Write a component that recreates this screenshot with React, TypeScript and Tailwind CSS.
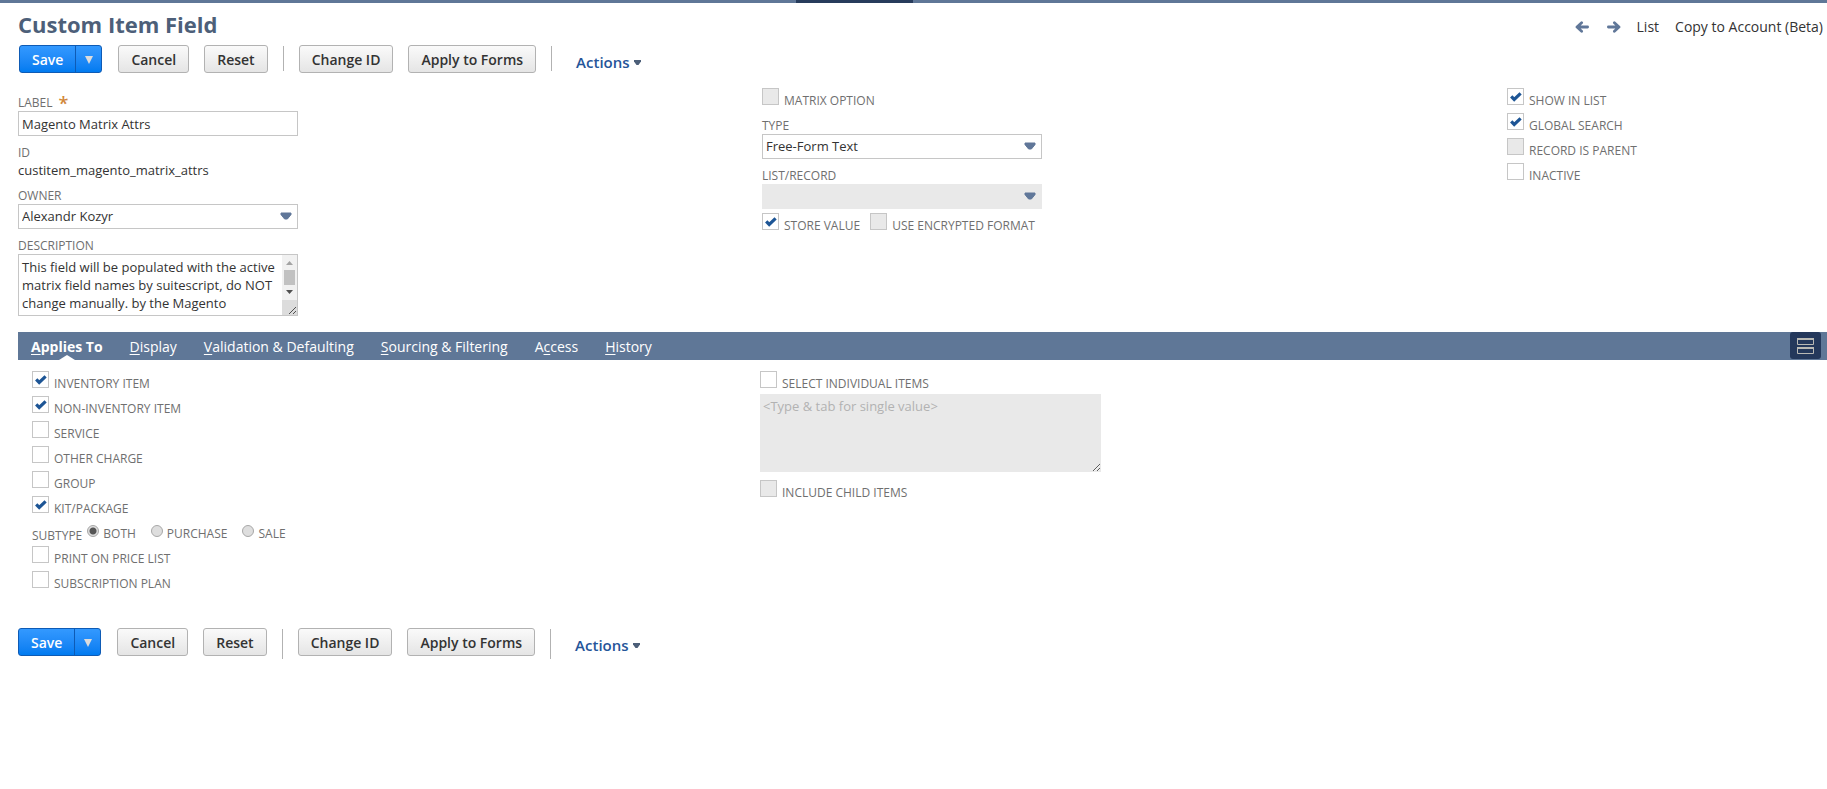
import type { ReactNode } from 'react';

const itemTypes = [
    { id: 'inventory', label: 'INVENTORY ITEM', checked: true },
    { id: 'noninventory', label: 'NON-INVENTORY ITEM', checked: true },
    { id: 'service', label: 'SERVICE', checked: false },
    { id: 'othercharge', label: 'OTHER CHARGE', checked: false },
    { id: 'group', label: 'GROUP', checked: false },
    { id: 'kit', label: 'KIT/PACKAGE', checked: true },
];

const subtypes = ['BOTH', 'PURCHASE', 'SALE'];

// key is the index of the underlined access key letter
const tabs = [
    { label: 'Applies To', key: 0 },
    { label: 'Display', key: 0 },
    { label: 'Validation & Defaulting', key: 0 },
    { label: 'Sourcing & Filtering', key: 0 },
    { label: 'Access', key: 1 },
    { label: 'History', key: 0 },
];

function Checkbox({ id, label, checked = false, disabled = false }: { id: string; label: string; checked?: boolean; disabled?: boolean }) {
    return (
        <div className="flex h-[25px] items-start">
            <span className="relative block h-[17px] w-[17px]">
                <input
                    id={id}
                    type="checkbox"
                    defaultChecked={checked}
                    disabled={disabled}
                    className="peer block h-[17px] w-[17px] appearance-none border border-[#c6c6c6] bg-white disabled:bg-[#e9e9e9]"
                />
                <svg viewBox="0 0 17 17" className="pointer-events-none absolute inset-0 hidden h-[17px] w-[17px] peer-checked:block">
                    <path d="M4.2 8.4 L7.2 11.4 L13.6 5.4" fill="none" stroke="#1d5595" strokeWidth="3.2" />
                </svg>
            </span>
            <label htmlFor={id} className="ml-[5px] pt-[5px] text-xs leading-4 text-[#6f6f6f]">{label}</label>
        </div>
    );
}

function FieldLabel({ htmlFor, children }: { htmlFor: string; children: ReactNode }) {
    return (
        <label htmlFor={htmlFor} className="flex h-[17px] items-start pt-px text-xs leading-4 text-[#6f6f6f]">{children}</label>
    );
}

function SelectField({ id, label, value, disabled = false }: { id: string; label: string; value: string; disabled?: boolean }) {
    return (
        <div className="mb-2 w-[280px]">
            <FieldLabel htmlFor={id}>{label}</FieldLabel>
            <div className="relative">
                <select
                    id={id}
                    defaultValue={value}
                    disabled={disabled}
                    className="block h-[25px] w-full appearance-none border border-[#c6c6c6] bg-white px-[3px] pt-px text-[13px] text-[#333] opacity-100 disabled:border-[#e9e9e9] disabled:bg-[#e9e9e9]"
                >
                    <option value={value}>{value}</option>
                </select>
                <svg viewBox="0 0 12 8" className="pointer-events-none absolute top-2 right-[6px] h-2 w-3">
                    <path d="M1 1 H11 V2.6 L7.4 7 H4.6 L1 2.6 Z" fill="#607799" stroke="#607799" strokeLinejoin="round" />
                </svg>
            </div>
        </div>
    );
}

function GrayButton({ children }: { children: ReactNode }) {
    return (
        <button type="button" className="h-7 rounded-[3px] border border-[#b2b2b2] bg-linear-to-b from-[#fafafa] to-[#e5e5e5] px-3 pt-px text-sm leading-5 font-semibold text-[#333]">
            {children}
        </button>
    );
}

function ButtonBar({ tall = false }: { tall?: boolean }) {
    const divider = tall ? 'mt-px h-[30px] w-px bg-[#b2b2b2]' : 'mt-px h-[25px] w-px bg-[#b2b2b2]';

    return (
        <div className="flex items-start">
            <div className="mr-4 flex h-7 rounded-[3px] border border-[#0e5bb5] bg-linear-to-b from-[#3399ff] to-[#007bf0] text-white">
                <button type="button" className="px-3 pt-px text-sm leading-5 font-semibold">Save</button>
                <button type="button" aria-label="More save options" className="flex w-[26px] items-center justify-center border-l border-[#0e5bb5] pt-px">
                    <svg viewBox="0 0 8 8" className="h-2 w-2">
                        <path d="M0 0 H8 L4 8 Z" fill="#dcdcdc" />
                    </svg>
                </button>
            </div>
            <div className="flex gap-[15px]">
                <GrayButton>Cancel</GrayButton>
                <GrayButton>Reset</GrayButton>
                <span className={divider} />
                <GrayButton>Change ID</GrayButton>
                <GrayButton>Apply to Forms</GrayButton>
                <span className={divider} />
            </div>
            <a href="#actions" className="ml-6 flex items-center gap-1 pt-[7px] text-[15px] leading-5 font-semibold text-[#255599]">
                Actions
                <svg viewBox="0 0 7 5" className="h-[5px] w-[7px]">
                    <path d="M0 0 H7 V1.5 L4.5 5 H2.5 L0 1.5 Z" fill="#4d5f79" />
                </svg>
            </a>
        </div>
    );
}

function Arrow({ flip = false }: { flip?: boolean }) {
    return (
        <svg viewBox="0 0 14 12" className={flip ? 'h-3 w-[14px] -scale-x-100' : 'h-3 w-[14px]'}>
            <path d="M6.6 1.8 L2 6 L6.6 10.2 M2.4 6 H12.6" fill="none" stroke="#607799" strokeWidth="2.8" strokeLinecap="round" strokeLinejoin="round" />
        </svg>
    );
}

// Always-visible scrollbar with the resize corner below it
function ScrollTrack() {
    return (
        <svg viewBox="0 0 15 60" className="pointer-events-none absolute top-px right-px h-[60px] w-[15px]">
            <path d="M0 0 H15 V45 H0 Z" fill="#f1f1f1" />
            <path d="M0 45 H15 V60 H0 Z" fill="#dcdcdc" />
            <path d="M4 10 L7.5 6 L11 10 Z" fill="#a3a3a3" />
            <path d="M2 15 H13 V30 H2 Z" fill="#c1c1c1" />
            <path d="M4 35 H11 L7.5 39 Z" fill="#505050" />
            <path d="M7 59 L14 52 M11 59 L14 56" stroke="#505050" strokeWidth="1" />
        </svg>
    );
}

export default function App() {
    return (
        <div className="min-h-screen bg-white font-['Open_Sans',sans-serif] text-[#333]">
            {/* Bottom edge of the navigation bar */}
            <div className="flex h-[3px] bg-[#5f7797]">
                <div className="ml-[796px] w-[117px] bg-[#273c5c]" />
            </div>

            <header className="flex items-start justify-between pr-1 pl-[18px]">
                <h1 className="pt-[6px] text-[22px] leading-[30px] font-bold text-[#4d5f79]">Custom Item Field</h1>
                <nav className="flex items-center gap-4 pt-[14px] text-sm leading-5">
                    <a href="#prev" aria-label="Previous"><Arrow /></a>
                    <a href="#next" aria-label="Next" className="ml-[2px]"><Arrow flip /></a>
                    <a href="#list">List</a>
                    <a href="#copy">Copy to Account (Beta)</a>
                </nav>
            </header>

            <div className="mt-[6px] pl-[19px]">
                <ButtonBar />
            </div>

            <main className="pl-[18px]">
                <div className="mt-[15px] grid grid-cols-[744fr_745fr_320px]">
                    <div className="pt-[6px]">
                        <div className="mb-2 w-[280px]">
                            <FieldLabel htmlFor="label">
                                LABEL <span className="ml-[6px] text-lg leading-4 font-semibold text-[#d1873a]">*</span>
                            </FieldLabel>
                            <input id="label" type="text" defaultValue="Magento Matrix Attrs" className="block h-[25px] w-full border border-[#c6c6c6] px-[3px] text-[13px]" />
                        </div>
                        <div className="mb-2">
                            <div className="h-[17px] pt-px text-xs leading-4 text-[#6f6f6f]">ID</div>
                            <div className="text-[13px] leading-[18px]">custitem_magento_matrix_attrs</div>
                        </div>
                        <SelectField id="owner" label="OWNER" value="Alexandr Kozyr" />
                        <FieldLabel htmlFor="description">DESCRIPTION</FieldLabel>
                        <div className="relative w-[280px]">
                            <textarea
                                id="description"
                                defaultValue="This field will be populated with the active matrix field names by suitescript, do NOT change manually. by the Magento connector. It is used for matrix items."
                                className="block h-[62px] w-full resize-none overflow-hidden border border-[#c6c6c6] pt-[3px] pr-[18px] pl-[3px] text-[13px] leading-[18px]"
                            />
                            <ScrollTrack />
                        </div>
                    </div>

                    <div>
                        <Checkbox id="matrix" label="MATRIX OPTION" disabled />
                        <div className="pt-[4px]">
                            <SelectField id="type" label="TYPE" value="Free-Form Text" />
                            <SelectField id="listrecord" label="LIST/RECORD" value="" disabled />
                        </div>
                        <div className="-mt-1 flex gap-[10px]">
                            <Checkbox id="store" label="STORE VALUE" checked />
                            <Checkbox id="encrypted" label="USE ENCRYPTED FORMAT" disabled />
                        </div>
                    </div>

                    <div>
                        <Checkbox id="showinlist" label="SHOW IN LIST" checked />
                        <Checkbox id="globalsearch" label="GLOBAL SEARCH" checked />
                        <Checkbox id="parent" label="RECORD IS PARENT" disabled />
                        <Checkbox id="inactive" label="INACTIVE" />
                    </div>
                </div>

                <div className="mt-4 flex h-7 items-start justify-between bg-[#5f7797] pr-[6px] pl-[13px]">
                    <div role="tablist" className="flex h-full gap-[27px]">
                        {tabs.map((tab, index) => (
                            <button
                                key={tab.label}
                                type="button"
                                role="tab"
                                aria-selected={index === 0}
                                className={index === 0 ? 'relative pt-[2px] text-sm leading-5 font-bold text-white' : 'pt-[2px] text-sm leading-5 text-white'}
                            >
                                {tab.label.slice(0, tab.key)}
                                <span className="underline underline-offset-2">{tab.label[tab.key]}</span>
                                {tab.label.slice(tab.key + 1)}
                                {index === 0 && (
                                    <svg viewBox="0 0 16 5" className="absolute bottom-0 left-1/2 h-[5px] w-4 -translate-x-1/2">
                                        <path d="M0 5 L8 0 L16 5 Z" fill="#fff" />
                                    </svg>
                                )}
                            </button>
                        ))}
                    </div>
                    <button type="button" aria-label="Toggle tab layout" className="flex h-[27px] w-[31px] items-center justify-center rounded-[3px] bg-[#24385b]">
                        <svg viewBox="0 0 17 16" className="h-4 w-[17px]" fill="none" stroke="#b9b9b4">
                            <path d="M0.5 1 V6.5 H16.5 V1 M0.5 10 V15.5 H16.5 V10" />
                            <path d="M0 1 H17 M0 10 H17" strokeWidth="2" />
                        </svg>
                    </button>
                </div>

                <div className="grid grid-cols-[1fr_1fr_339px] pt-[11px] pl-[14px]">
                    <div>
                        {itemTypes.map(item => (
                            <Checkbox key={item.id} id={item.id} label={item.label} checked={item.checked} />
                        ))}
                        <fieldset className="flex h-[25px] items-start text-xs leading-4 text-[#6f6f6f]">
                            <legend className="float-left mr-[5px] pt-[7px]">SUBTYPE</legend>
                            <div className="flex gap-[15px]">
                                {subtypes.map((name, index) => (
                                    <label key={name} className="flex items-start">
                                        <input
                                            type="radio"
                                            name="subtype"
                                            defaultChecked={index === 0}
                                            className="mt-1 mr-1 h-3 w-3 appearance-none rounded-full border border-[#a8a8a8] bg-[#dedede] checked:bg-[radial-gradient(circle,#555_3px,#dedede_4px)]"
                                        />
                                        <span className="pt-[5px]">{name}</span>
                                    </label>
                                ))}
                            </div>
                        </fieldset>
                        <Checkbox id="pricelist" label="PRINT ON PRICE LIST" />
                        <Checkbox id="subscription" label="SUBSCRIPTION PLAN" />
                    </div>
                    <div>
                        <Checkbox id="individual" label="SELECT INDIVIDUAL ITEMS" />
                        <textarea
                            aria-label="Individual items"
                            placeholder="<Type & tab for single value>"
                            disabled
                            className="-mt-[2px] mb-2 block h-[78px] w-[341px] resize bg-[#e9e9e9] px-[3px] pt-[3px] text-[13px] leading-[18px] placeholder:text-[#b2b2b2]"
                        />
                        <Checkbox id="children" label="INCLUDE CHILD ITEMS" disabled />
                    </div>
                </div>

                <div className="mt-8">
                    <ButtonBar tall />
                </div>
            </main>
        </div>
    );
}
